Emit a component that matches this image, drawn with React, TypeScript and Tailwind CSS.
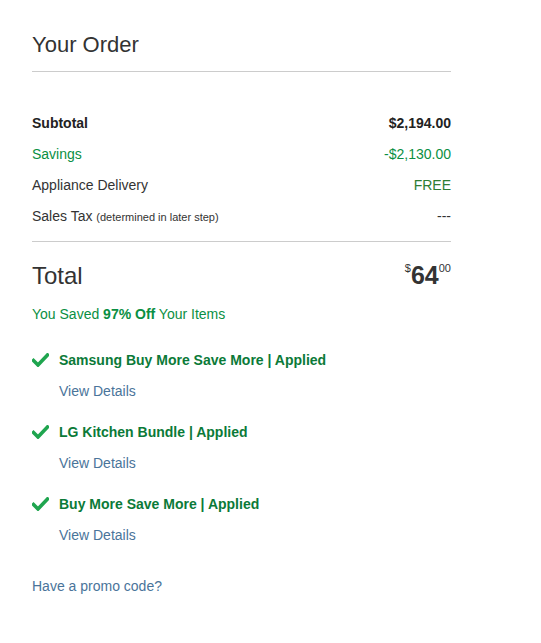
const promos = ['Samsung Buy More Save More | Applied', 'LG Kitchen Bundle | Applied', 'Buy More Save More | Applied']

function Check() {
  return (
    <svg width="17" height="14" viewBox="0 0 17 14" className="shrink-0">
      <path d="M1.5 7.5 L6 12 L15.5 2" fill="none" stroke="#1fa54f" strokeWidth="3.6" strokeLinecap="square" />
    </svg>
  )
}

export default function App() {
  return (
    <div className="min-h-screen bg-white text-[#222]" style={{ fontFamily: '"Liberation Sans", Arial, sans-serif' }}>
      <div className="ml-8 w-[419px] pt-[31px]">
        <h1 className="text-[22px] leading-[28px] text-[#333]">Your Order</h1>
        <div className="mt-[12px] h-px bg-[#ccc]" />

        <div className="mt-[36px] flex flex-col text-[14px]">
          <div className="flex h-[31px] items-center justify-between font-bold text-[#222]">
            <span>Subtotal</span>
            <span>$2,194.00</span>
          </div>
          <div className="flex h-[31px] items-center justify-between text-[#0a8f43]">
            <span>Savings</span>
            <span>-$2,130.00</span>
          </div>
          <div className="flex h-[31px] items-center justify-between text-[#333]">
            <span>Appliance Delivery</span>
            <span className="text-[#2e7d32]">FREE</span>
          </div>
          <div className="flex h-[31px] items-center justify-between text-[#333]">
            <span>
              Sales Tax <span className="text-[11px]">(determined in later step)</span>
            </span>
            <span>---</span>
          </div>
        </div>

        <div className="mt-[9px] h-px bg-[#ccc]" />

        <div className="mt-[19px] flex h-[29px] items-center justify-between">
          <span className="text-[24px] text-[#333]">Total</span>
          <span className="flex items-start font-bold text-[#333]">
            <span className="text-[11px] leading-[14px] font-normal">$</span>
            <span className="text-[25px] leading-[29px]">64</span>
            <span className="text-[11px] leading-[14px] font-normal">00</span>
          </span>
        </div>

        <p className="mt-[14px] text-[14px] leading-[20px] text-[#0a8f43]">
          You Saved <span className="font-bold">97% Off</span> Your Items
        </p>

        <div className="mt-[26px] flex flex-col gap-[21px]">
          {promos.map(p => (
            <div key={p}>
              <div className="flex h-[20px] items-center gap-[10px]">
                <Check />
                <span className="text-[14px] font-bold text-[#0b7a38]">{p}</span>
              </div>
              <div className="mt-[11px] pl-[27px] text-[14px] leading-[20px] text-[#4a749a]">View Details</div>
            </div>
          ))}
        </div>

        <p className="mt-[31px] text-[14px] leading-[20px] text-[#4a749a]">Have a promo code?</p>
      </div>
    </div>
  )
}
